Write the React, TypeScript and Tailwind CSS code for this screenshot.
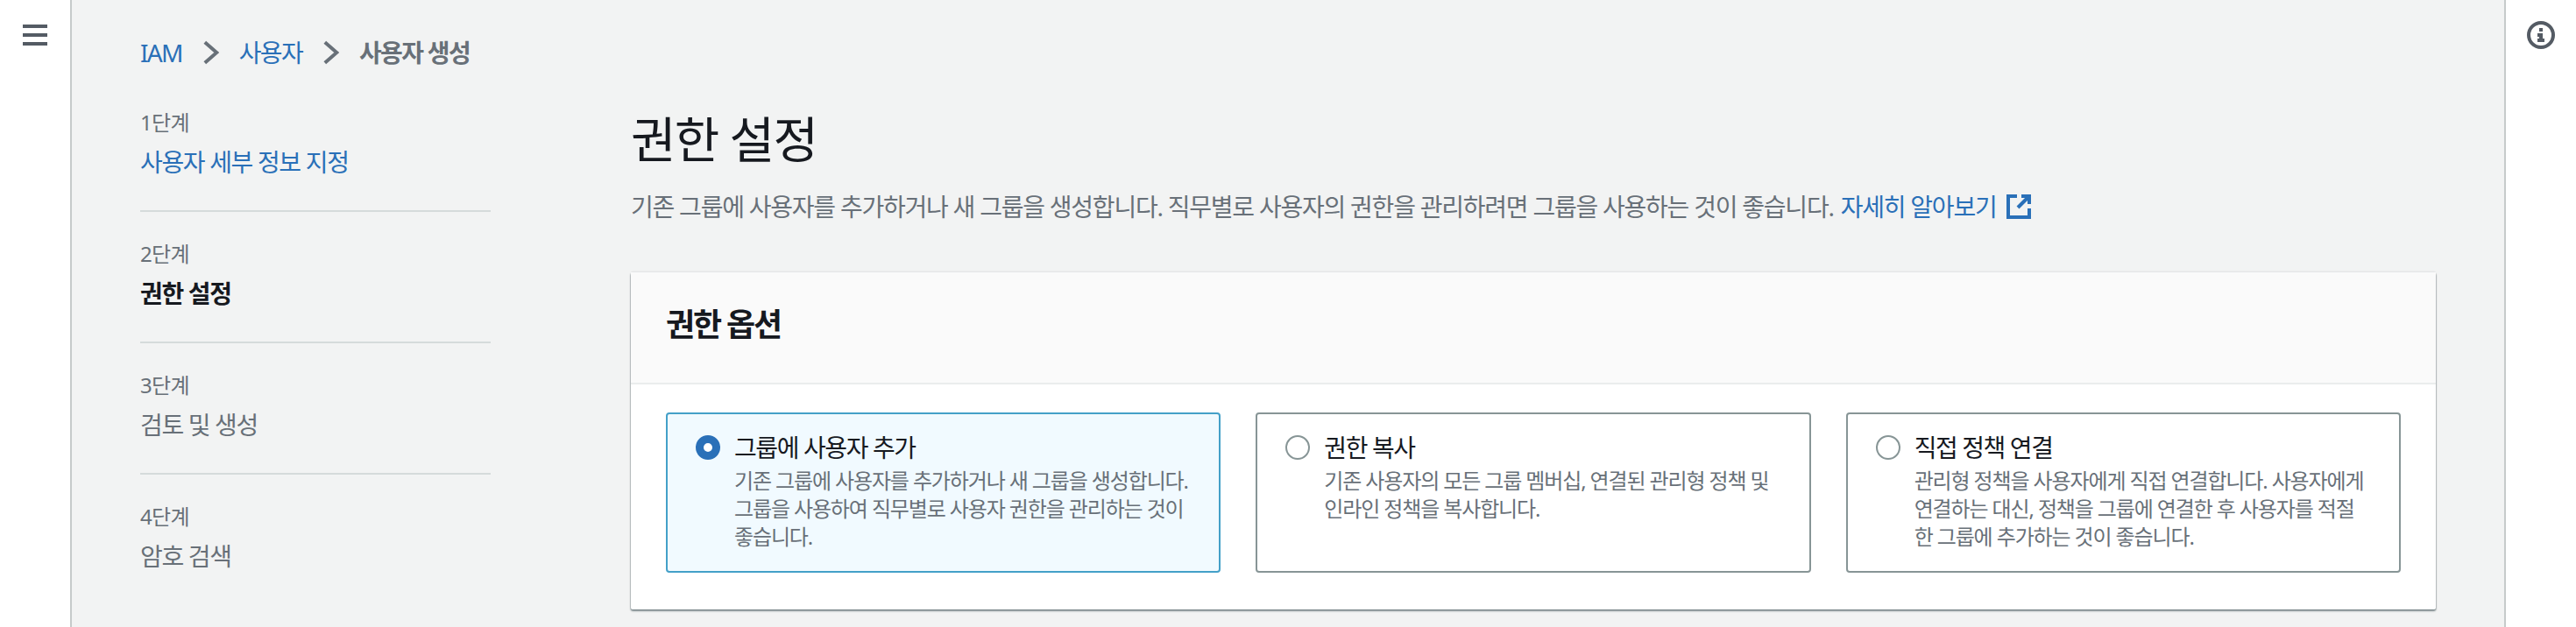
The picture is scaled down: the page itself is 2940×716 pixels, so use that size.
const font = "[font-family:'Noto_Sans','Noto_Sans_CJK_KR',sans-serif]";

const steps = [
    { step: "1단계", title: "사용자 세부 정보 지정", cls: "text-[#2a70b8]" },
    { step: "2단계", title: "권한 설정", cls: "font-bold text-[#16191f]" },
    { step: "3단계", title: "검토 및 생성", cls: "text-[#687078]" },
    { step: "4단계", title: "암호 검색", cls: "text-[#687078]" },
];

const options = [
    {
        title: "그룹에 사용자 추가",
        lines: ["기존 그룹에 사용자를 추가하거나 새 그룹을 생성합니다.", "그룹을 사용하여 직무별로 사용자 권한을 관리하는 것이", "좋습니다."],
        selected: true,
    },
    {
        title: "권한 복사",
        lines: ["기존 사용자의 모든 그룹 멤버십, 연결된 관리형 정책 및", "인라인 정책을 복사합니다."],
        selected: false,
    },
    {
        title: "직접 정책 연결",
        lines: ["관리형 정책을 사용자에게 직접 연결합니다. 사용자에게", "연결하는 대신, 정책을 그룹에 연결한 후 사용자를 적절", "한 그룹에 추가하는 것이 좋습니다."],
        selected: false,
    },
];

function Chevron() {
    return (
        <svg viewBox="0 0 20 30" className="ml-6 mr-[23px] h-[30px] w-[18px] shrink-0" fill="none" stroke="#687078" strokeWidth="4.5">
            <path d="M2 2l15 13L2 28" />
        </svg>
    );
}

function OptionCard({ title, lines, selected }: { title: string; lines: string[]; selected: boolean }) {
    return (
        <div
            className={
                selected
                    ? "flex h-[183px] flex-1 gap-4 rounded-[4px] border-2 border-[#44a0c8] bg-[#f1faff] pl-8 pt-[18px]"
                    : "flex h-[183px] flex-1 gap-4 rounded-[4px] border-2 border-[#879596] bg-white pl-8 pt-[18px]"
            }
        >
            {selected ? (
                <div className="mt-1.5 h-7 w-7 shrink-0 rounded-full border-[9px] border-[#2a70b8] bg-white" />
            ) : (
                <div className="mt-1.5 h-7 w-7 shrink-0 rounded-full border-2 border-[#879596] bg-white" />
            )}
            <div>
                <div className="text-[28px] leading-10 tracking-[-0.05em] text-[#16191f]">{title}</div>
                <div className="mt-0.5 text-2xl leading-8 tracking-[-0.047em] text-[#687078]">
                    {lines.map((line, i) => (
                        <div key={i} className="whitespace-nowrap">{line}</div>
                    ))}
                </div>
            </div>
        </div>
    );
}

export default function App() {
    return (
        <div className={`flex h-[716px] w-[2940px] overflow-hidden bg-[#f2f3f3] tracking-[-0.04em] ${font}`}>
            {/* Left rail */}
            <div className="h-full w-[82px] shrink-0 border-r-2 border-[#c6caca] bg-white pl-[26px] pt-[28px]">
                <div className="flex w-7 flex-col gap-1.5">
                    <div className="h-1 bg-[#545b64]" />
                    <div className="h-1 bg-[#545b64]" />
                    <div className="h-1 bg-[#545b64]" />
                </div>
            </div>

            <div className="flex-1 px-[78px]">
                <nav className="mt-10 flex h-10 items-center text-[28px] leading-10 tracking-[-0.06em]">
                    <span className="text-[#2a70b8]">IAM</span>
                    <Chevron />
                    <span className="text-[#2a70b8]">사용자</span>
                    <Chevron />
                    <span className="font-bold text-[#687078]">사용자 생성</span>
                </nav>

                <div className="flex">
                    {/* Steps */}
                    <div className="mt-[44px] w-[400px] shrink-0">
                        {steps.map((s, i) => (
                            <div key={s.step} className={i < 3 ? "mb-8 h-[118px] border-b-2 border-[#d5dbdb]" : "h-[118px]"}>
                                <div className="text-2xl leading-8 text-[#687078]">{s.step}</div>
                                <div className={`mt-[9px] text-[28px] leading-10 tracking-[-0.048em] ${s.cls}`}>{s.title}</div>
                            </div>
                        ))}
                    </div>

                    {/* Content */}
                    <div className="ml-40 flex-1">
                        <h1 className="mt-[42px] text-[56px] leading-[72px] tracking-[-0.03em] text-[#16191f]">권한 설정</h1>
                        <div className="mt-[22px] flex items-center text-[28px] leading-10 tracking-[-0.044em] text-[#687078]">
                            <span>기존 그룹에 사용자를 추가하거나 새 그룹을 생성합니다. 직무별로 사용자의 권한을 관리하려면 그룹을 사용하는 것이 좋습니다.</span>
                            <span className="ml-2 text-[#2a70b8]">자세히 알아보기</span>
                            <svg viewBox="0 0 28 28" className="ml-3 h-7 w-7" fill="none" stroke="#2a70b8" strokeWidth="4">
                                <path d="M12 2H2v24h24V16" />
                                <path d="M17 2h9v9" />
                                <path d="M26 2L13 15" />
                            </svg>
                        </div>

                        <div className="mt-[55px] h-[385px] rounded-[2px] bg-white shadow-[0_2px_2px_0_rgba(0,28,36,0.4),1px_1px_1px_0_rgba(0,28,36,0.15),-1px_1px_1px_0_rgba(0,28,36,0.15),0_-1px_2px_0_rgba(0,28,36,0.08)]">
                            <div className="flex h-[128px] items-center border-b-2 border-[#eaeded] bg-[#fafafa] px-10 pb-1.5 text-4xl font-bold tracking-[-0.06em] text-[#16191f]">
                                권한 옵션
                            </div>
                            <div className="flex gap-10 px-10 pt-[32px]">
                                {options.map((o) => (
                                    <OptionCard key={o.title} {...o} />
                                ))}
                            </div>
                        </div>
                    </div>
                </div>
            </div>

            {/* Right rail */}
            <div className="h-full w-[82px] shrink-0 border-l-2 border-[#c6caca] bg-white pl-6 pt-6">
                <svg viewBox="0 0 32 32" className="h-8 w-8" fill="none">
                    <circle cx="16" cy="16" r="14" stroke="#545b64" strokeWidth="4" />
                    <rect x="14" y="8" width="4" height="4" fill="#545b64" />
                    <path d="M12 14h6v6h2v4h-8v-4h2v-2h-2z" fill="#545b64" />
                </svg>
            </div>
        </div>
    );
}
